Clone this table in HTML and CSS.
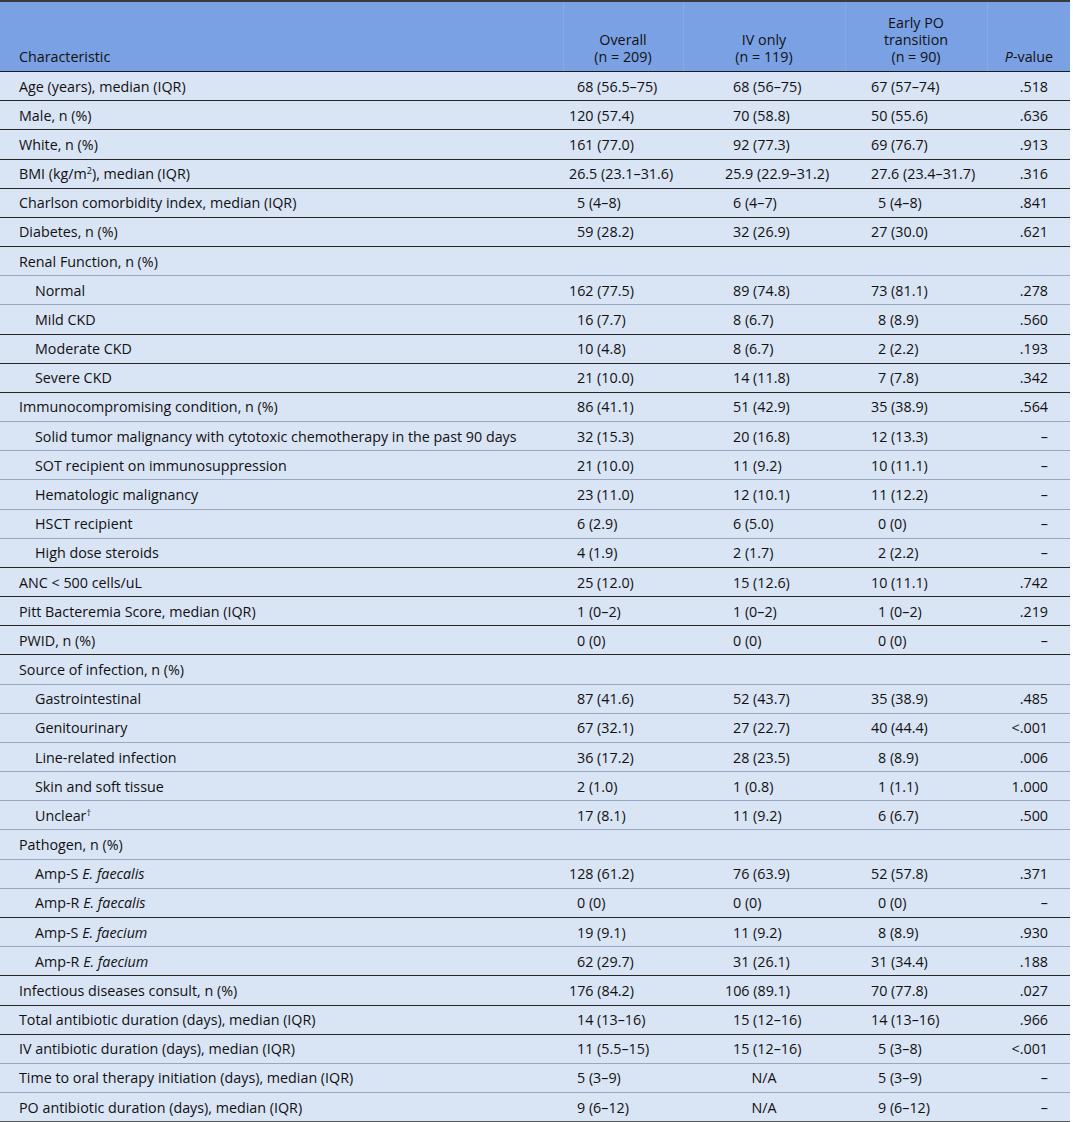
FILE: index.html
```html
<!DOCTYPE html>
<html lang="en">
<head>
    <meta charset="UTF-8">
    <title>Baseline characteristics</title>
    <link rel="stylesheet" href="styles.css">
</head>
<body>
    <table class="stats">
        <colgroup>
            <col class="col-char">
            <col class="col-all">
            <col class="col-iv">
            <col class="col-po">
            <col class="col-p">
        </colgroup>
        <thead>
            <tr>
                <th class="label">Characteristic</th>
                <th>Overall<br>(n = 209)</th>
                <th>IV only<br>(n = 119)</th>
                <th>Early PO<br>transition<br>(n = 90)</th>
                <th class="pval"><i>P</i>-value</th>
            </tr>
        </thead>
        <tbody>
            <tr><td>Age (years), median (IQR)</td><td class="all">68 (56.5–75)</td><td class="iv">68 (56–75)</td><td class="po">67 (57–74)</td><td class="p">.518</td></tr>
            <tr><td>Male, n (%)</td><td class="all w">120 (57.4)</td><td class="iv">70 (58.8)</td><td class="po">50 (55.6)</td><td class="p">.636</td></tr>
            <tr><td>White, n (%)</td><td class="all w">161 (77.0)</td><td class="iv">92 (77.3)</td><td class="po">69 (76.7)</td><td class="p">.913</td></tr>
            <tr><td>BMI (kg/m<sup>2</sup>), median (IQR)</td><td class="all w">26.5 (23.1–31.6)</td><td class="iv w">25.9 (22.9–31.2)</td><td class="po">27.6 (23.4–31.7)</td><td class="p">.316</td></tr>
            <tr><td>Charlson comorbidity index, median (IQR)</td><td class="all">5 (4–8)</td><td class="iv">6 (4–7)</td><td class="po n">5 (4–8)</td><td class="p">.841</td></tr>
            <tr><td>Diabetes, n (%)</td><td class="all">59 (28.2)</td><td class="iv">32 (26.9)</td><td class="po">27 (30.0)</td><td class="p">.621</td></tr>
            <tr class="lt"><td>Renal Function, n (%)</td><td></td><td></td><td></td><td></td></tr>
            <tr class="sub lt"><td>Normal</td><td class="all w">162 (77.5)</td><td class="iv">89 (74.8)</td><td class="po">73 (81.1)</td><td class="p">.278</td></tr>
            <tr class="sub"><td>Mild CKD</td><td class="all">16 (7.7)</td><td class="iv">8 (6.7)</td><td class="po n">8 (8.9)</td><td class="p">.560</td></tr>
            <tr class="sub"><td>Moderate CKD</td><td class="all">10 (4.8)</td><td class="iv">8 (6.7)</td><td class="po n">2 (2.2)</td><td class="p">.193</td></tr>
            <tr class="sub"><td>Severe CKD</td><td class="all">21 (10.0)</td><td class="iv">14 (11.8)</td><td class="po n">7 (7.8)</td><td class="p">.342</td></tr>
            <tr class="lt"><td>Immunocompromising condition, n (%)</td><td class="all">86 (41.1)</td><td class="iv">51 (42.9)</td><td class="po">35 (38.9)</td><td class="p">.564</td></tr>
            <tr class="sub lt"><td>Solid tumor malignancy with cytotoxic chemotherapy in the past 90 days</td><td class="all">32 (15.3)</td><td class="iv">20 (16.8)</td><td class="po">12 (13.3)</td><td class="p">–</td></tr>
            <tr class="sub lt"><td>SOT recipient on immunosuppression</td><td class="all">21 (10.0)</td><td class="iv">11 (9.2)</td><td class="po">10 (11.1)</td><td class="p">–</td></tr>
            <tr class="sub lt"><td>Hematologic malignancy</td><td class="all">23 (11.0)</td><td class="iv">12 (10.1)</td><td class="po">11 (12.2)</td><td class="p">–</td></tr>
            <tr class="sub lt"><td>HSCT recipient</td><td class="all">6 (2.9)</td><td class="iv">6 (5.0)</td><td class="po n">0 (0)</td><td class="p">–</td></tr>
            <tr class="sub"><td>High dose steroids</td><td class="all">4 (1.9)</td><td class="iv">2 (1.7)</td><td class="po n">2 (2.2)</td><td class="p">–</td></tr>
            <tr><td>ANC &lt; 500 cells/uL</td><td class="all">25 (12.0)</td><td class="iv">15 (12.6)</td><td class="po">10 (11.1)</td><td class="p">.742</td></tr>
            <tr><td>Pitt Bacteremia Score, median (IQR)</td><td class="all">1 (0–2)</td><td class="iv">1 (0–2)</td><td class="po n">1 (0–2)</td><td class="p">.219</td></tr>
            <tr><td>PWID, n (%)</td><td class="all">0 (0)</td><td class="iv">0 (0)</td><td class="po n">0 (0)</td><td class="p">–</td></tr>
            <tr class="lt"><td>Source of infection, n (%)</td><td></td><td></td><td></td><td></td></tr>
            <tr class="sub lt"><td>Gastrointestinal</td><td class="all">87 (41.6)</td><td class="iv">52 (43.7)</td><td class="po">35 (38.9)</td><td class="p">.485</td></tr>
            <tr class="sub lt"><td>Genitourinary</td><td class="all">67 (32.1)</td><td class="iv">27 (22.7)</td><td class="po">40 (44.4)</td><td class="p">&lt;.001</td></tr>
            <tr class="sub lt"><td>Line-related infection</td><td class="all">36 (17.2)</td><td class="iv">28 (23.5)</td><td class="po n">8 (8.9)</td><td class="p">.006</td></tr>
            <tr class="sub lt"><td>Skin and soft tissue</td><td class="all">2 (1.0)</td><td class="iv">1 (0.8)</td><td class="po n">1 (1.1)</td><td class="p">1.000</td></tr>
            <tr class="sub lt"><td>Unclear<sup>†</sup></td><td class="all">17 (8.1)</td><td class="iv">11 (9.2)</td><td class="po n">6 (6.7)</td><td class="p">.500</td></tr>
            <tr class="lt"><td>Pathogen, n (%)</td><td></td><td></td><td></td><td></td></tr>
            <tr class="sub lt"><td>Amp-S <i>E. faecalis</i></td><td class="all w">128 (61.2)</td><td class="iv">76 (63.9)</td><td class="po">52 (57.8)</td><td class="p">.371</td></tr>
            <tr class="sub"><td>Amp-R <i>E. faecalis</i></td><td class="all">0 (0)</td><td class="iv">0 (0)</td><td class="po n">0 (0)</td><td class="p">–</td></tr>
            <tr class="sub lt"><td>Amp-S <i>E. faecium</i></td><td class="all">19 (9.1)</td><td class="iv">11 (9.2)</td><td class="po n">8 (8.9)</td><td class="p">.930</td></tr>
            <tr class="sub"><td>Amp-R <i>E. faecium</i></td><td class="all">62 (29.7)</td><td class="iv">31 (26.1)</td><td class="po">31 (34.4)</td><td class="p">.188</td></tr>
            <tr><td>Infectious diseases consult, n (%)</td><td class="all w">176 (84.2)</td><td class="iv w">106 (89.1)</td><td class="po">70 (77.8)</td><td class="p">.027</td></tr>
            <tr><td>Total antibiotic duration (days), median (IQR)</td><td class="all">14 (13–16)</td><td class="iv">15 (12–16)</td><td class="po">14 (13–16)</td><td class="p">.966</td></tr>
            <tr class="lt"><td>IV antibiotic duration (days), median (IQR)</td><td class="all">11 (5.5–15)</td><td class="iv">15 (12–16)</td><td class="po n">5 (3–8)</td><td class="p">&lt;.001</td></tr>
            <tr class="lt"><td>Time to oral therapy initiation (days), median (IQR)</td><td class="all">5 (3–9)</td><td class="c">N/A</td><td class="po n">5 (3–9)</td><td class="p">–</td></tr>
            <tr class="last"><td>PO antibiotic duration (days), median (IQR)</td><td class="all">9 (6–12)</td><td class="c">N/A</td><td class="po n">9 (6–12)</td><td class="p">–</td></tr>
        </tbody>
    </table>
</body>
</html>
```

FILE: styles.css
```css
body {
    margin: 0;
    background: #ffffff;
    font-family: 'Open Sans', 'Noto Sans', sans-serif;
    font-size: 14.3px;
    color: #111111;
}

.stats {
    width: 1070px;
    table-layout: fixed;
    border-collapse: collapse;
    border-top: 2px solid #3a3a3a;
}

.col-char { width: 563px; }
.col-all { width: 120px; }
.col-iv { width: 162px; }
.col-po { width: 142px; }
.col-p { width: 83px; }

thead th {
    background: #7ba1e5;
    font-weight: normal;
    text-align: center;
    vertical-align: bottom;
    line-height: 17px;
    height: 63px;
    padding: 0 0 6px;
    border-bottom: 1px solid #1c1c1c;
    border-left: 1px solid #86aae8;
}

thead th.label {
    text-align: left;
    padding-left: 19px;
    border-left: none;
}

thead th.pval {
    text-align: right;
    padding-right: 17px;
}

tbody td {
    background: #d9e4f5;
    height: 28.18px;
    padding: 0;
    white-space: nowrap;
    border-bottom: 1px solid #262626;
}

tbody td:first-child {
    padding-left: 19px;
}

tbody tr.sub td:first-child {
    padding-left: 35px;
}

tbody tr.lt td {
    border-bottom-color: #9aa6bb;
}

tbody tr.last td {
    border-bottom-color: #555555;
}

.all { padding-left: 14px; }
.all.w { padding-left: 6px; }
.iv { padding-left: 50px; }
.iv.w { padding-left: 42px; }
.po { padding-left: 26px; }
.po.n { padding-left: 33px; }
.c { text-align: center; }

tbody td.p {
    text-align: right;
    padding-right: 22px;
}

sup {
    font-size: 9px;
    line-height: 0;
    vertical-align: 5px;
}
```
